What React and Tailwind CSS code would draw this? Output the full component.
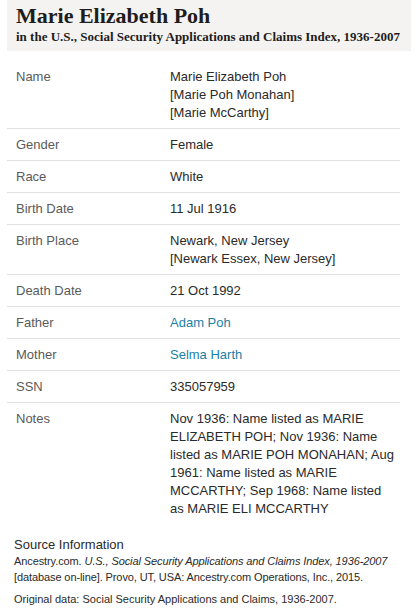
import React from 'react';

const rows = [
  { label: 'Name', lines: ['Marie Elizabeth Poh', '[Marie Poh Monahan]', '[Marie McCarthy]'] },
  { label: 'Gender', lines: ['Female'] },
  { label: 'Race', lines: ['White'] },
  { label: 'Birth Date', lines: ['11 Jul 1916'] },
  { label: 'Birth Place', lines: ['Newark, New Jersey', '[Newark Essex, New Jersey]'] },
  { label: 'Death Date', lines: ['21 Oct 1992'] },
  { label: 'Father', lines: ['Adam Poh'], link: true },
  { label: 'Mother', lines: ['Selma Harth'], link: true },
  { label: 'SSN', lines: ['335057959'] },
  {
    label: 'Notes',
    text: 'Nov 1936: Name listed as MARIE ELIZABETH POH; Nov 1936: Name listed as MARIE POH MONAHAN; Aug 1961: Name listed as MARIE MCCARTHY; Sep 1968: Name listed as MARIE ELI MCCARTHY',
  },
];

const App = () => {
  return (
    <div className="w-[414px] h-[614px] bg-white overflow-hidden font-['Liberation_Sans',Arial,sans-serif]">
      <div className="ml-[7px] mr-[3px] bg-[#f5f3f1] pl-[9px] pt-[3px] pb-[7px] font-['Liberation_Serif',serif] text-[#1d1d1d]">
        <h1 className="text-[22px] font-bold leading-[26px]">Marie Elizabeth Poh</h1>
        <div className="text-[13px] font-bold leading-[15px] whitespace-nowrap">
          in the U.S., Social Security Applications and Claims Index, 1936-2007
        </div>
      </div>

      <div className="ml-[7px] mr-[14px] mt-[10px]">
        {rows.map((row, i) => (
          <div
            key={row.label}
            className={`flex pl-[9px] pt-[7px] pb-[6px] text-[13px] leading-[18px] ${i < rows.length - 1 ? 'border-b border-[#e3e1de]' : ''}`}
          >
            <div className="w-[154px] shrink-0 text-[#5a5a5a]">{row.label}</div>
            <div className={`flex-1 pr-[4px] ${row.link ? 'text-[#1b7fa6]' : 'text-[#2a2a2a]'}`}>
              {row.lines ? row.lines.map((l) => <div key={l}>{l}</div>) : row.text}
            </div>
          </div>
        ))}
      </div>

      <div className="px-[14px] mt-[12px] text-[#2a2a2a]">
        <div className="text-[13px] leading-[17px]">Source Information</div>
        <p className="text-[11px] leading-[16px] tracking-[-0.1px]">
          Ancestry.com. <i>U.S., Social Security Applications and Claims Index, 1936-2007</i> [database on-line]. Provo, UT, USA: Ancestry.com Operations, Inc., 2015.
        </p>
        <p className="text-[11px] leading-[16px] mt-[6px]">
          Original data: Social Security Applications and Claims, 1936-2007.
        </p>
      </div>
    </div>
  );
};

export default App;
